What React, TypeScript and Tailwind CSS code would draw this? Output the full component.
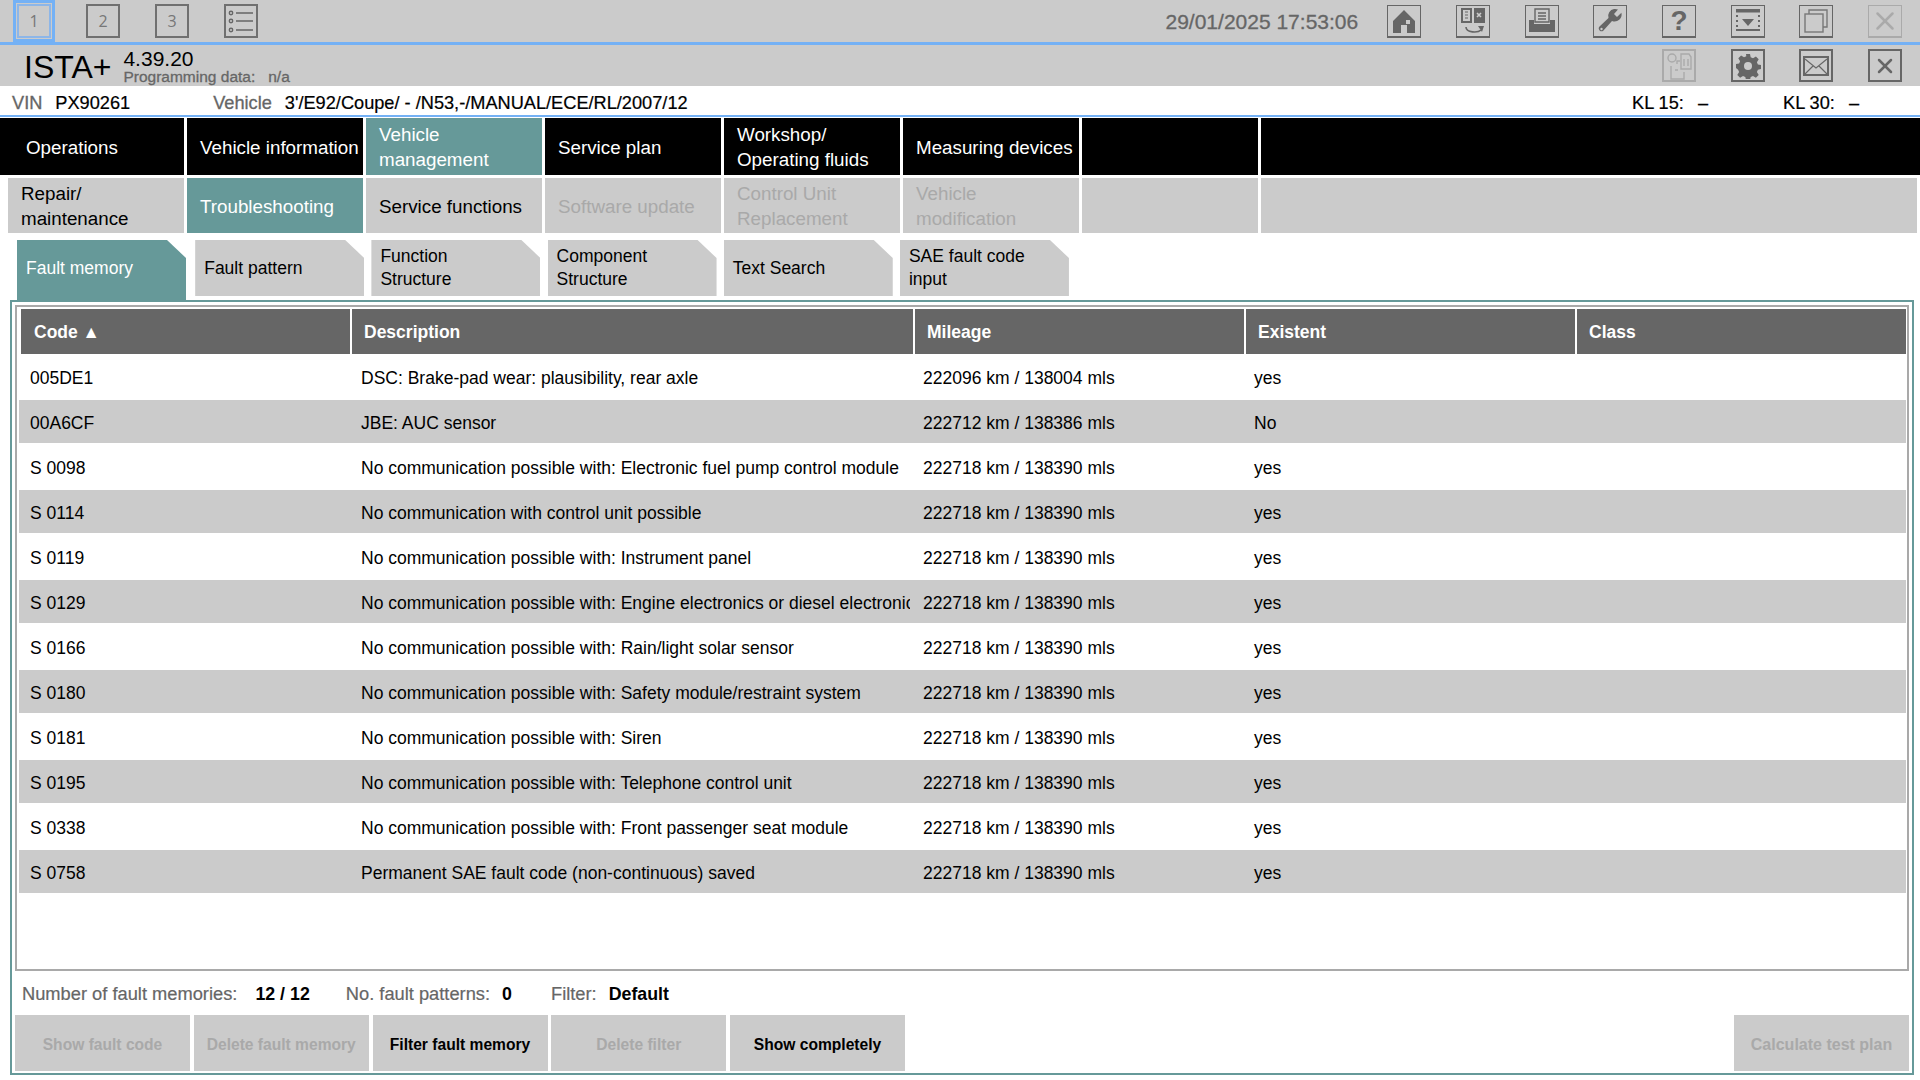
import React from "react";
import { X } from "lucide-react";

const navMain = [
  { label: "Operations", className: "bg-black text-white" },
  { label: "Vehicle information", className: "bg-black text-white" },
  { label: "Vehicle management", className: "bg-[#669999] text-white" },
  { label: "Service plan", className: "bg-black text-white" },
  { label: "Workshop/ Operating fluids", className: "bg-black text-white" },
  { label: "Measuring devices", className: "bg-black text-white" },
  { label: "", className: "bg-black text-white" },
  { label: "", className: "bg-black text-white" },
];

const navSub = [
  { label: "Repair/ maintenance", className: "bg-[#cbcbcb] text-black" },
  { label: "Troubleshooting", className: "bg-[#669999] text-white" },
  { label: "Service functions", className: "bg-[#cbcbcb] text-black" },
  { label: "Software update", className: "bg-[#cbcbcb] text-[#a9a9a9]" },
  { label: "Control Unit Replacement", className: "bg-[#cbcbcb] text-[#a9a9a9]" },
  { label: "Vehicle modification", className: "bg-[#cbcbcb] text-[#a9a9a9]" },
  { label: "", className: "bg-[#cbcbcb]" },
  { label: "", className: "bg-[#cbcbcb]" },
];

const tabs = [
  ["Fault memory"],
  ["Fault pattern"],
  ["Function", "Structure"],
  ["Component", "Structure"],
  ["Text Search"],
  ["SAE fault code", "input"],
];

const headers = ["Code ▲", "Description", "Mileage", "Existent", "Class"];

const rows = [
  ["005DE1", "DSC: Brake-pad wear: plausibility, rear axle", "222096 km / 138004 mls", "yes"],
  ["00A6CF", "JBE: AUC sensor", "222712 km / 138386 mls", "No"],
  ["S 0098", "No communication possible with: Electronic fuel pump control module", "222718 km / 138390 mls", "yes"],
  ["S 0114", "No communication with control unit possible", "222718 km / 138390 mls", "yes"],
  ["S 0119", "No communication possible with: Instrument panel", "222718 km / 138390 mls", "yes"],
  ["S 0129", "No communication possible with: Engine electronics or diesel electronics", "222718 km / 138390 mls", "yes"],
  ["S 0166", "No communication possible with: Rain/light solar sensor", "222718 km / 138390 mls", "yes"],
  ["S 0180", "No communication possible with: Safety module/restraint system", "222718 km / 138390 mls", "yes"],
  ["S 0181", "No communication possible with: Siren", "222718 km / 138390 mls", "yes"],
  ["S 0195", "No communication possible with: Telephone control unit", "222718 km / 138390 mls", "yes"],
  ["S 0338", "No communication possible with: Front passenger seat module", "222718 km / 138390 mls", "yes"],
  ["S 0758", "Permanent SAE fault code (non-continuous) saved", "222718 km / 138390 mls", "yes"],
];

const buttons = [
  { label: "Show fault code", enabled: false },
  { label: "Delete fault memory", enabled: false },
  { label: "Filter fault memory", enabled: true },
  { label: "Delete filter", enabled: false },
  { label: "Show completely", enabled: true },
];

const IconBox = ({ children, faded, thin }: { children: React.ReactNode; faded?: boolean; thin?: boolean }) => (
  <div className={`w-[34px] h-[33px] flex items-center justify-center ${thin ? "border-[1.5px] border-b-2" : "border-2"} ${faded ? "border-[#aaaaaa] text-[#aaaaaa]" : "border-[#666666] text-[#666666]"}`}>
    {children}
  </div>
);

const NumBox = ({ n, active }: { n: string; active?: boolean }) => (
  <div className={`w-[34px] h-[34px] flex items-center justify-center text-[16px] font-['Open_Sans',sans-serif] text-[#777777] border-2 ${active ? "border-[#8db6e8] outline-[3px] outline-[#74b1f5] outline-offset-[1px]" : "border-[#707070]"}`}>
    {n}
  </div>
);

const ListIcon = () => (
  <svg width="30" height="30" viewBox="0 0 30 30" fill="none" stroke="#666666" strokeWidth="1.4">
    <circle cx="5" cy="7" r="1.700" />
    <circle cx="5" cy="15" r="1.700" />
    <circle cx="5" cy="24" r="1.700" />
    <path d="M10 7h17M10 15h17M10 24h17" />
  </svg>
);

const HomeIcon = () => (
  <svg width="24" height="25" viewBox="0 0 24 25" fill="#666666">
    <path d="M12 1 L23 12 V24 H15 V16 H9 V24 H1 V12 Z" />
    <rect x="14" y="11" width="4" height="4" fill="#cbcbcb" />
  </svg>
);

const SwapIcon = () => (
  <svg width="28" height="28" viewBox="0 0 28 28">
    <rect x="2" y="1" width="11" height="15" fill="#666666" />
    <rect x="4" y="3" width="7" height="11" fill="#cbcbcb" />
    <path d="M6 5h3M6 8h3M6 11h3" stroke="#666666" strokeWidth="1.2" />
    <rect x="15" y="1" width="11" height="15" fill="#666666" />
    <path d="M18 6l4 4M22 6l-4 4" stroke="#cbcbcb" strokeWidth="1.6" />
    <path d="M7 20c0 6 12 6 15 3" fill="none" stroke="#666666" strokeWidth="1.6" />
    <path d="M19 19h6l-2 6z" fill="#666666" />
  </svg>
);

const PrintIcon = () => (
  <svg width="28" height="26" viewBox="0 0 28 26">
    <path d="M7 1h14v13H7z" fill="#cbcbcb" stroke="#666666" strokeWidth="1.4" />
    <path d="M10 5h8M10 8h8M10 11h8" stroke="#666666" strokeWidth="1.3" />
    <path d="M1 12h5v4h16v-4h5v12H1z" fill="#666666" />
  </svg>
);

const WrenchIcon = () => (
  <svg width="28" height="28" viewBox="0 0 28 28" fill="#666666">
    <path d="M18 2a7 7 0 0 1 4 .6L18 7l3 3 4.400-4.200A7 7 0 0 1 16 14L7 24a3 3 0 0 1-4-4l9.500-9A7 7 0 0 1 18 2z" />
    <circle cx="5.500" cy="22" r="1.200" fill="#cbcbcb" />
  </svg>
);

const DownloadIcon = () => (
  <svg width="26" height="26" viewBox="0 0 26 26" fill="#666666">
    <rect x="1" y="1" width="24" height="3.500" />
    <path d="M7 11h12l-6 7z" />
    <rect x="1" y="21" width="24" height="2" />
    <path d="M2 7v2M2 12v2M2 17v2M24 7v2M24 12v2M24 17v2" stroke="#666666" strokeWidth="2" />
  </svg>
);

const WindowsIcon = () => (
  <svg width="26" height="26" viewBox="0 0 26 26" fill="none" stroke="#777777" strokeWidth="1.4">
    <path d="M6 6V2h18v17h-4" />
    <rect x="2" y="6" width="18" height="18" />
  </svg>
);

const DocsIcon = () => (
  <svg width="28" height="30" viewBox="0 0 28 30" fill="none" stroke="#aaaaaa" strokeWidth="1.4">
    <circle cx="7" cy="7" r="4" />
    <path d="M16 3h8l2 3v12H16z" />
    <path d="M19 8v7M23 8v7" />
    <path d="M12 13v-3h3M6 15v13h13v-7M10 19h3" />
  </svg>
);

const GearIcon = () => (
  <svg width="26" height="26" viewBox="0 0 26 26">
    <path
      fill="#666666"
      d="M11 1h4l.7 3.300 2.300 1 2.900-1.800 2.800 2.800-1.800 2.900 1 2.300 3.100.5v4l-3.100.7-1 2.300 1.800 2.900-2.800 2.800-2.900-1.800-2.300 1-.7 3.100h-4l-.7-3.100-2.300-1-2.900 1.800-2.800-2.800 1.800-2.900-1-2.300L1 15V11l3.100-.5 1-2.300-1.800-2.900 2.800-2.800 2.900 1.800 2.300-1z"
    />
    <circle cx="13" cy="13" r="4" fill="#cbcbcb" />
  </svg>
);

const MailIcon = () => (
  <svg width="26" height="20" viewBox="0 0 26 20" fill="none" stroke="#666666">
    <rect x="1" y="1" width="24" height="18" strokeWidth="2" />
    <path d="M2 3l11 9 11-9M2 18l8-8M24 18l-8-8" strokeWidth="1.100" />
  </svg>
);

const App = () => {
  return (
    <div className="w-[1920px] h-[1080px] bg-white overflow-hidden flex flex-col font-['Liberation_Sans',Arial,sans-serif] text-black">
      {/* top tool bar */}
      <div className="h-[45px] bg-[#cbcbcb] border-b-[3px] border-[#74b1f5] flex items-start justify-between shrink-0">
        <div className="flex gap-[35px] pl-[17px] pt-[4px]">
          <NumBox n="1" active />
          <NumBox n="2" />
          <NumBox n="3" />
          <div className="w-[34px] h-[34px] border-2 border-[#707070] flex items-center justify-center">
            <ListIcon />
          </div>
        </div>
        <div className="flex items-center pt-[5px] pr-[18px]">
          <span className="text-[21px] text-[#666666] mr-[29px] [-webkit-text-stroke:0.3px_#666666]">29/01/2025 17:53:06</span>
          <div className="flex gap-[34.7px]">
            <IconBox thin><HomeIcon /></IconBox>
            <IconBox thin><SwapIcon /></IconBox>
            <IconBox thin><PrintIcon /></IconBox>
            <IconBox thin><WrenchIcon /></IconBox>
            <IconBox thin><span className="text-[28px] font-bold leading-none">?</span></IconBox>
            <IconBox thin><DownloadIcon /></IconBox>
            <IconBox thin><WindowsIcon /></IconBox>
            <IconBox thin faded><X size={30} strokeWidth={2} /></IconBox>
          </div>
        </div>
      </div>

      {/* title bar */}
      <div className="h-[41px] bg-[#cbcbcb] flex justify-between shrink-0">
        <div className="flex items-start pl-[24px]">
          <span className="text-[32px] leading-none mt-[6px]">ISTA+</span>
          <div className="ml-[12px] pt-[4px]">
            <div className="text-[21px] leading-[20px]">4.39.20</div>
            <div className="flex text-[15.5px] leading-[16px] text-[#666666] [-webkit-text-stroke:0.3px_#666666]">
              <span>Programming data:</span>
              <span className="ml-[13px]">n/a</span>
            </div>
          </div>
        </div>
        <div className="flex gap-[34.7px] pt-[4px] pr-[18px]">
          <IconBox faded><DocsIcon /></IconBox>
          <IconBox><GearIcon /></IconBox>
          <IconBox><MailIcon /></IconBox>
          <IconBox><X size={24} strokeWidth={2.5} /></IconBox>
        </div>
      </div>

      {/* vehicle line */}
      <div className="h-[29px] pt-[7px] flex items-center text-[18.2px] shrink-0">
        <span className="text-[#666666] ml-[12px] [-webkit-text-stroke:0.3px_#666666]">VIN</span>
        <span className="ml-[13px] [-webkit-text-stroke:0.2px_#000000]">PX90261</span>
        <span className="text-[#666666] ml-[83px] [-webkit-text-stroke:0.3px_#666666]">Vehicle</span>
        <span className="ml-[13px] [-webkit-text-stroke:0.2px_#000000]">3'/E92/Coupe/ - /N53,-/MANUAL/ECE/RL/2007/12</span>
        <div className="ml-auto w-[151px] flex [-webkit-text-stroke:0.2px_#000000]">
          <span>KL 15:</span>
          <span className="ml-[14px]">–</span>
        </div>
        <div className="w-[137px] flex [-webkit-text-stroke:0.2px_#000000]">
          <span>KL 30:</span>
          <span className="ml-[14px]">–</span>
        </div>
      </div>
      <div className="h-[2px] bg-[#74b1f5] shrink-0" />

      {/* main nav */}
      <div className="grid grid-cols-[184px_176px_176px_176px_176px_176px_176px_1fr] gap-x-[3px] mt-[1px] h-[57px] shrink-0">
        {navMain.map((item, i) => (
          <div key={i} className={`flex items-center pt-[1px] text-[18.8px] leading-[25px] ${i === 0 ? "pl-[26px]" : "pl-[13px]"} pr-[2px] ${item.className}`}>
            <span>{item.label}</span>
          </div>
        ))}
      </div>

      {/* sub nav */}
      <div className="grid grid-cols-[176px_176px_176px_176px_176px_176px_176px_1fr] gap-x-[3px] mt-[3px] h-[55px] pl-[8px] pr-[3px] shrink-0">
        {navSub.map((item, i) => (
          <div key={i} className={`flex items-center pt-[1px] text-[18.8px] leading-[25px] pl-[13px] pr-[6px] ${item.className}`}>
            <span>{item.label}</span>
          </div>
        ))}
      </div>

      {/* tabs */}
      <div className="flex gap-[7.2px] pl-[17px] mt-[7px] h-[60px] shrink-0 items-start">
        {tabs.map((t, i) => (
          <div
            key={t[0]}
            className={`w-[169px] flex flex-col justify-center pl-[9px] pr-[20px] text-[17.5px] leading-[23px] [clip-path:polygon(0_0,calc(100%-19px)_0,100%_18px,100%_100%,0_100%)] ${i === 0 ? "mr-[2px] h-[60px] pb-[4px] bg-[#669999] text-white" : "h-[56px] bg-[#cbcbcb] text-black"}`}
          >
            {t.map((line) => (
              <span key={line}>{line}</span>
            ))}
          </div>
        ))}
      </div>

      {/* panel */}
      <div className="flex-1 ml-[10px] mr-[6px] mb-[5px] border-2 border-[#669999] flex flex-col min-h-0">
        <div className="h-[666px] mt-[3px] mx-[3px] border-2 border-[#a9a9a9] pl-[2px] pr-[1px] pt-[2px] shrink-0 overflow-hidden">
          <div className="grid grid-cols-[329px_561px_329px_329px_1fr] gap-x-[2px] h-[45px] ml-[2px] text-white text-[17.5px] font-bold">
            {headers.map((h, i) => (
              <div key={h} className={`flex items-center pt-[1px] bg-[#666666] ${i === 0 ? "pl-[13px]" : "pl-[12px]"}`}>
                {h}
              </div>
            ))}
          </div>
          <div className="mt-[1px]">
            {rows.map((r, i) => (
              <div key={r[0]} className={`grid grid-cols-[331px_560px_333px_1fr] h-[43px] mb-[2px] pt-[3px] items-center text-[17.5px] ${i % 2 === 1 ? "bg-[#cbcbcb]" : "bg-white"}`}>
                <div className="pl-[11px]">{r[0]}</div>
                <div className="pl-[11px] whitespace-nowrap overflow-hidden">{r[1]}</div>
                <div className="pl-[13px]">{r[2]}</div>
                <div className="pl-[11px]">{r[3]}</div>
              </div>
            ))}
          </div>
        </div>
        <div className="flex items-center h-[44px] pt-[2px] pl-[10px] text-[18.3px] shrink-0">
          <span className="text-[#666666] [-webkit-text-stroke:0.2px_#666666]">Number of fault memories:</span>
          <span className="ml-[18px] text-[17.8px] font-bold">12 / 12</span>
          <span className="ml-[36px] text-[#666666] [-webkit-text-stroke:0.2px_#666666]">No. fault patterns:</span>
          <span className="ml-[12px] text-[17.8px] font-bold">0</span>
          <span className="ml-[39px] text-[#666666] [-webkit-text-stroke:0.2px_#666666]">Filter:</span>
          <span className="ml-[12px] text-[17.8px] font-bold">Default</span>
        </div>
        <div className="flex items-start pl-[3px] pr-[3px] shrink-0">
          <div className="flex gap-[3.75px]">
            {buttons.map((b) => (
              <div key={b.label} className={`w-[175px] h-[56px] pt-[4px] bg-[#cbcbcb] flex items-center justify-center text-[15.6px] font-bold ${b.enabled ? "text-black" : "text-[#a9a9a9]"}`}>
                {b.label}
              </div>
            ))}
          </div>
          <div className="ml-auto w-[175px] h-[56px] pt-[4px] bg-[#cbcbcb] flex items-center justify-center text-[16px] font-bold text-[#a9a9a9]">
            Calculate test plan
          </div>
        </div>
      </div>
    </div>
  );
};

export default App;
